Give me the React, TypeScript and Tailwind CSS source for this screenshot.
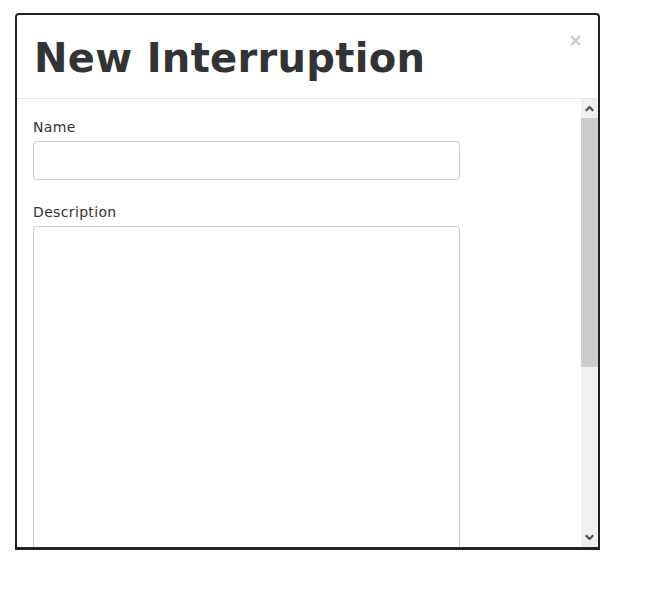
import React from 'react';

const font = { fontFamily: '"DejaVu Sans", Verdana, sans-serif' };

const ScrollTrack: React.FC = () => (
  <div className="flex w-[17px] shrink-0 flex-col bg-[#f0f0f0]">
    <div className="flex h-[19px] items-center justify-center">
      <svg width="9" height="7" viewBox="0 0 9 7">
        <path d="M0.8 5.8 L4.5 2 L8.2 5.8" fill="none" stroke="#505050" strokeWidth="2.2" />
      </svg>
    </div>
    <div className="h-[249px] bg-[#cdcdcd]" />
    <div className="flex-1" />
    <div className="flex h-[19px] items-center justify-center">
      <svg width="9" height="7" viewBox="0 0 9 7">
        <path d="M0.8 1.2 L4.5 5 L8.2 1.2" fill="none" stroke="#505050" strokeWidth="2.2" />
      </svg>
    </div>
  </div>
);

const App: React.FC = () => {
  return (
    <div className="h-[592px] w-[648px] bg-white pl-[15px] pt-[13px]" style={font}>
      {/* Modal */}
      <div className="relative flex h-[537px] w-[585px] flex-col overflow-hidden rounded-t-[4px] border-2 border-b-[3px] border-[#222] bg-white">
        <div className="h-[84px] shrink-0 border-b border-[#e5e5e5] pl-[17px] pt-[21px]">
          <h3 className="text-[40px] font-bold leading-[44px] tracking-[0.3px] text-[#333]">New Interruption</h3>
        </div>
        <button className="absolute right-[15px] top-[15px] text-[18px] font-bold leading-[20px] text-[#cccccc]">
          ×
        </button>

        {/* Body */}
        <div className="flex min-h-0 flex-1">
          <div className="flex-1 overflow-hidden pl-[16px] pt-[18px]">
            <label className="mb-[4px] block text-[14px] leading-[20px] tracking-[0.35px] text-[#333]">Name</label>
            <input
              type="text"
              className="block h-[39px] w-[427px] rounded-[4px] border border-[#c6cbd4] bg-white px-2 outline-none"
            />
            <label className="mb-[4px] mt-[22px] block text-[14px] leading-[20px] tracking-[0.35px] text-[#333]">
              Description
            </label>
            <textarea className="block h-[400px] w-[427px] resize-none rounded-[4px] border border-[#c6cbd4] bg-white outline-none" />
          </div>
          <ScrollTrack />
        </div>
      </div>
    </div>
  );
};

export default App;
